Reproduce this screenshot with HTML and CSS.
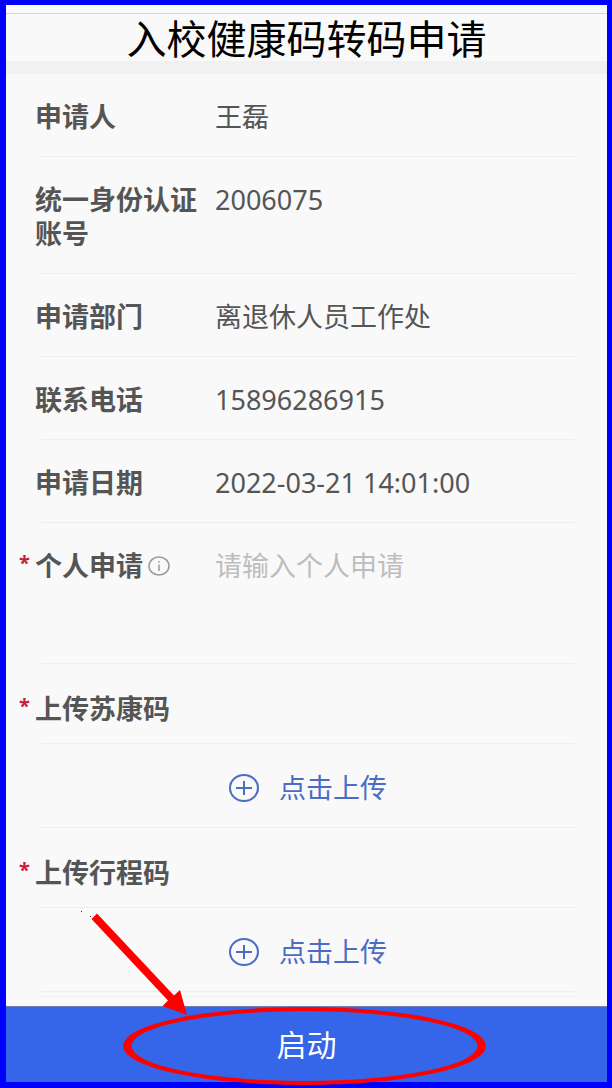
FILE: index.html
```html
<!DOCTYPE html>
<html lang="zh-CN">
<head>
<meta charset="utf-8">
<meta name="viewport" content="width=device-width, initial-scale=1">
<title>入校健康码转码申请</title>
<link rel="stylesheet" href="styles.css">
</head>
<body>
<form class="page">
  <header class="header">
    <h1 class="title">入校健康码转码申请</h1>
  </header>
  <main class="fields">
    <div class="row">
      <span class="label">申请人</span>
      <span class="value">王磊</span>
    </div>
    <div class="row">
      <span class="label">统一身份认证账号</span>
      <span class="value">2006075</span>
    </div>
    <div class="row">
      <span class="label">申请部门</span>
      <span class="value">离退休人员工作处</span>
    </div>
    <div class="row">
      <span class="label">联系电话</span>
      <span class="value">15896286915</span>
    </div>
    <div class="row">
      <span class="label">申请日期</span>
      <span class="value">2022-03-21 14:01:00</span>
    </div>
    <div class="row">
      <span class="required">*</span>
      <label class="label label-info" for="reason">个人申请
        <svg class="info-icon" viewBox="0 0 22 20" aria-hidden="true">
          <ellipse cx="11" cy="10" rx="10" ry="9"/>
          <path d="M11 8.500V15M11 5V6.600"/>
        </svg>
      </label>
      <textarea class="value input" id="reason" placeholder="请输入个人申请"></textarea>
    </div>
    <div class="row row-heading">
      <span class="required">*</span>
      <span class="label label-wide">上传苏康码</span>
    </div>
    <div class="upload-row">
      <button class="upload" type="button">
        <svg class="plus-icon" viewBox="0 0 30 28" aria-hidden="true">
          <ellipse cx="15" cy="14" rx="14" ry="13"/>
          <path d="M7 14H23M15 7V21"/>
        </svg>
        点击上传
      </button>
    </div>
    <div class="row row-heading">
      <span class="required">*</span>
      <span class="label label-wide">上传行程码</span>
    </div>
    <div class="upload-row">
      <button class="upload" type="button">
        <svg class="plus-icon" viewBox="0 0 30 28" aria-hidden="true">
          <ellipse cx="15" cy="14" rx="14" ry="13"/>
          <path d="M7 14H23M15 7V21"/>
        </svg>
        点击上传
      </button>
    </div>
    <div class="list-end"></div>
  </main>
  <footer class="footer">
    <button class="start" type="submit">启动</button>
    <svg class="callout" viewBox="0 0 601 182" aria-hidden="true">
      <path class="callout-ring" d="M117 140a181.500 39 0 1 0 363 0a181.500 39 0 1 0 -363 0ZM125.500 140a173 35 0 1 0 346 0a173 35 0 1 0 -346 0Z"/>
      <path class="callout-arrow" d="M91 7.500L168 89.500L174 84L181 109L156.500 100L162 94.500L85.500 13Z"/>
      <path class="callout-dot" d="M75 5h1v1h-1zM84 10h1v1h-1z"/>
    </svg>
  </footer>
</form>
</body>
</html>
```
FILE: styles.css
```css
* {
  box-sizing: border-box;
}

body {
  margin: 0;
  background: #f9f9f9;
  font-family: "Noto Sans", "Noto Sans CJK SC", sans-serif;
  font-size: 27px;
  line-height: 34px;
  color: #555;
}

button,
textarea {
  font: inherit;
}

.page {
  display: flex;
  flex-direction: column;
  min-height: 100vh;
  border: solid #00f;
  border-width: 5px 5px 6px 6px;
  background: #f9f9f9;
}

.header {
  padding-top: 8px;
  border-bottom: 13px solid #f1f1f1;
}

.title {
  margin: 0;
  padding-top: 3px;
  border-top: 1px solid #d6d6d6;
  font-size: 40px;
  font-weight: 400;
  line-height: 44px;
  text-align: center;
  color: #000;
}

.fields {
  flex: 1;
}

.row,
.upload-row {
  margin: 0 32px 0 13px;
  background: linear-gradient(#ededed, #ededed) 22px 100% / calc(100% - 22px) 1px no-repeat;
}

.row {
  display: grid;
  grid-template-columns: 16px 180px 1fr;
  padding: 26px 0 23px;
}

.required {
  grid-column: 1;
  font-size: 20px;
  line-height: 28px;
  font-weight: 700;
  color: #c41f3f;
}

.label {
  grid-column: 2;
  padding-right: 16px;
  font-weight: 700;
}

.label-info {
  display: flex;
  align-items: center;
  align-self: start;
  gap: 5px;
}

.label-wide {
  grid-column: 2 / -1;
}

.value {
  grid-column: 3;
}

.input {
  width: 100%;
  height: 92px;
  padding: 0;
  border: 0;
  outline: 0;
  resize: none;
  background: transparent;
  color: #555;
}

.input::placeholder {
  color: #bdbdbd;
  opacity: 1;
}

.info-icon {
  flex: none;
  width: 22px;
  height: 20px;
  fill: none;
  stroke: #999;
  stroke-width: 1.5;
}

.row-heading {
  padding: 28px 0 18px;
}

.upload-row {
  display: flex;
  justify-content: center;
  padding: 27px 0 23px 22px;
}

.upload {
  display: flex;
  align-items: center;
  gap: 20px;
  padding: 0;
  border: 0;
  background: none;
  color: #4a6cc4;
}

.plus-icon {
  width: 30px;
  height: 28px;
  fill: none;
  stroke: #4a6cc4;
  stroke-width: 2;
}

.list-end {
  height: 5px;
  margin: 0 32px 0 35px;
  border-bottom: 1px solid #f1f1f1;
}

.footer {
  position: relative;
}

.start {
  display: block;
  width: 100%;
  height: 76px;
  padding: 0;
  border: 0;
  border-top: 1px solid #6f7fb8;
  background: #3565e9;
  color: #fff;
  font-size: 30px;
}

.callout {
  position: absolute;
  left: 0;
  bottom: -6px;
  width: 100%;
  height: 182px;
  pointer-events: none;
}

.callout-ring {
  fill: #f00;
  fill-rule: evenodd;
}

.callout-arrow {
  fill: #f00;
}

.callout-dot {
  fill: #333;
}
```
